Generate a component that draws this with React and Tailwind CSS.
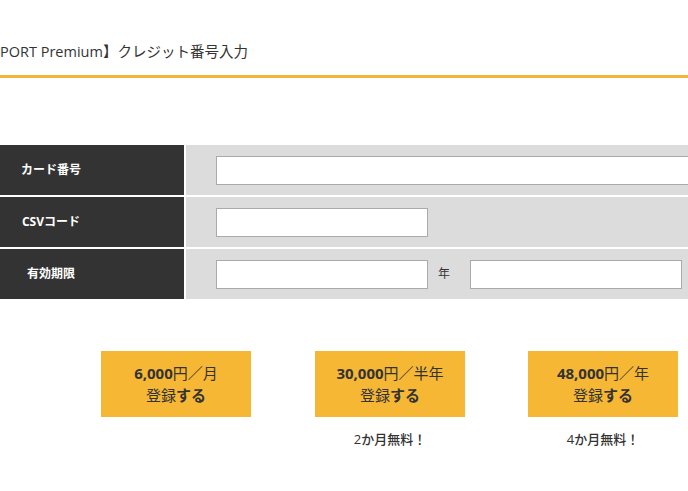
import React from "react";

const font = { fontFamily: '"Open Sans", "Noto Sans CJK JP", sans-serif' };

function Row({ label, children, labelClass = "" }) {
  return (
    <div className="flex h-[50px]">
      <div className="w-[184px] bg-[#333333] flex items-center">
        <div className={"w-[102px] text-center text-white text-[12px] font-bold " + labelClass}>{label}</div>
      </div>
      <div className="w-[2px] bg-white" />
      <div className="flex-1 bg-[#dcdcdc] flex items-center pl-[30px] overflow-hidden">{children}</div>
    </div>
  );
}

function Input({ className = "" }) {
  return <div className={"h-[29px] bg-white border border-[#aaaaaa] shrink-0 " + className} />;
}

function Plan({ price, unit, note }) {
  return (
    <div className="w-[150px] flex flex-col items-center">
      <div className="w-[150px] h-[66px] bg-[#f6b735] flex flex-col items-center justify-center text-[#333333] text-[15px] leading-[22px]">
        <div className="-mt-[1px]">
          <span className="font-bold">{price}</span>
          <span className="font-normal">円／{unit}</span>
        </div>
        <div>
          <span className="font-normal">登録</span>
          <span className="font-bold">する</span>
        </div>
      </div>
      {note ? (
        <div className="mt-[13px] text-[13px] leading-[18px] text-[#333333] font-medium">{note}</div>
      ) : null}
    </div>
  );
}

export default function App() {
  return (
    <div className="w-[688px] h-[491px] bg-white overflow-hidden" style={font}>
      <div className="h-[78px] border-b-[3px] border-[#f0b53a] pt-[42px]">
        <div className="text-[14.5px] leading-[20px] text-[#333333] whitespace-nowrap">
          PORT Premium】クレジット番号入力
        </div>
      </div>
      <div className="mt-[67px] flex flex-col gap-[2px]">
        <Row label="カード番号">
          <Input className="w-[520px]" />
        </Row>
        <Row label="CSVコード">
          <Input className="w-[212px]" />
        </Row>
        <Row label="有効期限">
          <Input className="w-[212px]" />
          <span className="ml-[10px] mr-[20px] text-[12px] text-[#333333]">年</span>
          <Input className="w-[212px]" />
        </Row>
      </div>
      <div className="mt-[52px] flex pl-[101px]">
        <Plan price="6,000" unit="月" />
        <div className="ml-[64px]">
          <Plan price="30,000" unit="半年" note="2か月無料！" />
        </div>
        <div className="ml-[63px]">
          <Plan price="48,000" unit="年" note="4か月無料！" />
        </div>
      </div>
    </div>
  );
}
